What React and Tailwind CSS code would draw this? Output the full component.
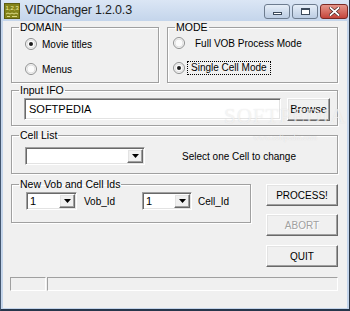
import React from 'react'

const raised =
  'border border-t-white border-l-white border-r-[#696969] border-b-[#696969] shadow-[inset_-1px_-1px_0_#a0a0a0,inset_1px_1px_0_#e3e3e3] bg-[#f0f0f0]'
const sunken =
  'border border-t-[#a0a0a0] border-l-[#a0a0a0] border-r-white border-b-white shadow-[inset_1px_1px_0_#696969,inset_-1px_-1px_0_#e3e3e3] bg-white'

function Group({ label, className = '', children }) {
  return (
    <fieldset className={`border border-[#a0a0a0] shadow-[inset_1px_1px_0_#fff,1px_1px_0_#fff] ${className}`}>
      <legend className="ml-[7px] px-[1px] text-[10.5px] leading-[12px]">{label}</legend>
      {children}
    </fieldset>
  )
}

function Radio({ checked }) {
  return (
    <svg width="12" height="12" viewBox="0 0 12 12" className="shrink-0">
      <circle cx="6" cy="6" r="5.5" fill="#fbfbfb" stroke="#8e8f8f" />
      <circle cx="6" cy="6" r="4" fill="none" stroke="#e0e0e0" />
      {checked && <circle cx="6" cy="6" r="2" fill="#1b1b1b" />}
    </svg>
  )
}

function Combo({ value, className = '' }) {
  return (
    <div className={`flex p-[1px] ${sunken} ${className}`}>
      <span className="flex-1 pl-[2px] text-[11px] leading-[15px]">{value}</span>
      <div className={`w-[16px] flex items-center justify-center ${raised}`}>
        <svg width="7" height="4" viewBox="0 0 7 4">
          <path d="M0 0h7L3.5 4z" fill="#000" />
        </svg>
      </div>
    </div>
  )
}

function Button({ children, disabled, className = '' }) {
  return (
    <div
      className={`flex items-center justify-center text-[10px] ${raised} ${
        disabled ? 'text-[#a0a0a0] [text-shadow:1px_1px_0_#fff]' : 'text-black'
      } ${className}`}
    >
      {children}
    </div>
  )
}

function AppIcon() {
  return (
    <svg width="16" height="16" viewBox="0 0 16 16">
      <rect width="16" height="16" fill="#83831a" />
      <rect x="0.5" y="0.5" width="15" height="15" fill="none" stroke="#5e5e10" />
      <text x="1.5" y="7" fontSize="6" fill="#f3f0a2" fontFamily="Liberation Sans, sans-serif">1,2,3</text>
      <path d="M2 11l2-1 2 1 2-1 2 1 2-1 2 1M3 13.5h3M8 13.5h5" stroke="#f3f0a2" strokeWidth="0.8" fill="none" />
    </svg>
  )
}

export default function App() {
  return (
    <div className="w-[350px] h-[311px] flex flex-col bg-[#c4d5eb] border-l border-r border-b-2 border-l-[#43566f] border-r-[#2a3646] border-b-[#26364b] text-black [font-family:'Liberation_Sans',Arial,sans-serif]">
      {/* title bar */}
      <div className="h-[21px] shrink-0 flex items-center pl-[3px] pr-[1px] bg-gradient-to-b from-[#dbe6f5] to-[#c4d5eb]">
        <AppIcon />
        <span className="ml-[5px] text-[12.5px] tracking-[-0.2px] text-[#1e1e1e]">VIDChanger 1.2.0.3</span>
        <div className="ml-auto flex items-center gap-[2px] self-start mt-[4px]">
          <div className="w-[26px] h-[15px] rounded-[3px] border border-[#6d7c8f] bg-gradient-to-b from-[#e6eef8] to-[#bccde3] flex items-end justify-center pb-[3px]">
            <div className="w-[9px] h-[3px] bg-white border border-[#3c4a5b]" />
          </div>
          <div className="w-[26px] h-[15px] rounded-[3px] border border-[#6d7c8f] bg-gradient-to-b from-[#e6eef8] to-[#bccde3] flex items-center justify-center">
            <div className="w-[9px] h-[7px] bg-white border border-[#3c4a5b] border-t-2" />
          </div>
          <div className="w-[28px] h-[15px] rounded-[3px] border border-[#7a2a24] bg-gradient-to-b from-[#e5958a] to-[#c4443a] flex items-center justify-center">
            <svg width="11" height="9" viewBox="0 0 11 9">
              <path d="M1.5 1l8 7M9.5 1l-8 7" stroke="#3b1a18" strokeWidth="3" strokeLinecap="square" />
              <path d="M1.5 1l8 7M9.5 1l-8 7" stroke="#fff" strokeWidth="1.8" strokeLinecap="square" />
            </svg>
          </div>
        </div>
      </div>

      {/* client area */}
      <div className="relative flex-1 mx-[2px] mb-[1px] bg-[#f0f0f0] pl-[8px] pr-[9px] flex flex-col">
        <div className="flex gap-[8px]">
          <Group label="DOMAIN" className="w-[148px] h-[62px]">
            <div className="pl-[13px] pt-[3px] flex flex-col gap-[9px] text-[10px]">
              <div className="h-[16px] flex items-center gap-[5px]">
                <Radio checked />
                <span>Movie titles</span>
              </div>
              <div className="h-[16px] flex items-center gap-[5px]">
                <Radio />
                <span>Menus</span>
              </div>
            </div>
          </Group>
          <Group label="MODE" className="flex-1 h-[62px]">
            <div className="pl-[5px] pt-[2px] flex flex-col gap-[9px] text-[10px]">
              <div className="h-[16px] flex items-center">
                <Radio />
                <span className="ml-[6px] px-[3px] border border-transparent">Full VOB Process Mode</span>
              </div>
              <div className="h-[16px] flex items-center">
                <Radio checked />
                <span className="ml-[2px] px-[3px] leading-[12px] border border-dotted border-black">Single Cell Mode</span>
              </div>
            </div>
          </Group>
        </div>

        <Group label="Input IFO" className="mt-[1px] h-[42px]">
          <div className="pl-[12px] pt-[2px] flex items-start">
            <div className={`w-[257px] h-[22px] flex items-center pl-[4px] text-[11px] ${sunken}`}>SOFTPEDIA</div>
            <Button className="ml-[6px] w-[43px] h-[23px] text-[11px]">Browse</Button>
          </div>
        </Group>

        <Group label="Cell List" className="mt-[3px] h-[45px]">
          <div className="pl-[13px] pt-[6px] flex items-center">
            <Combo value="" className="w-[120px] h-[18px]" />
            <span className="ml-[37px] text-[10px]">Select one Cell to change</span>
          </div>
        </Group>

        <div className="mt-[4px] flex items-start">
          <Group label="New Vob and Cell Ids" className="w-[240px] h-[45px]">
            <div className="pl-[14px] pt-[2px] flex items-center text-[10px]">
              <Combo value="1" className="w-[51px] h-[18px]" />
              <span className="ml-[7px] w-[58px]">Vob_Id</span>
              <Combo value="1" className="w-[50px] h-[18px]" />
              <span className="ml-[6px]">Cell_Id</span>
            </div>
          </Group>
          <div className="ml-auto w-[72px] pt-[6px] flex flex-col">
            <Button className="h-[22px]">PROCESS!</Button>
            <Button disabled className="h-[22px] mt-[8px]">ABORT</Button>
            <Button className="h-[22px] mt-[9px]">QUIT</Button>
          </div>
        </div>

        {/* status bar */}
        <div className="mt-[10px] -ml-[1px] flex gap-[1px] h-[14px]">
          <div className="w-[36px] border border-t-[#a0a0a0] border-l-[#a0a0a0] border-r-white border-b-white" />
          <div className="flex-1 border border-t-[#a0a0a0] border-l-[#a0a0a0] border-r-white border-b-white" />
        </div>

        {/* watermark */}
        <div className="pointer-events-none absolute left-[221px] top-[84px] flex flex-col items-center">
          <span className="text-[21px] leading-[22px] tracking-[1px] text-white/60 [font-family:'Liberation_Serif',serif] [text-shadow:0_0_1px_rgba(140,140,140,0.25)]">
            SOFTPEDIA
          </span>
          <span className="mt-[7px] text-[8px] leading-[8px] text-white/70 [font-family:'Liberation_Serif',serif] [text-shadow:0_0_1px_rgba(140,140,140,0.3)]">
            www.softpedia.com
          </span>
        </div>
      </div>
    </div>
  )
}
